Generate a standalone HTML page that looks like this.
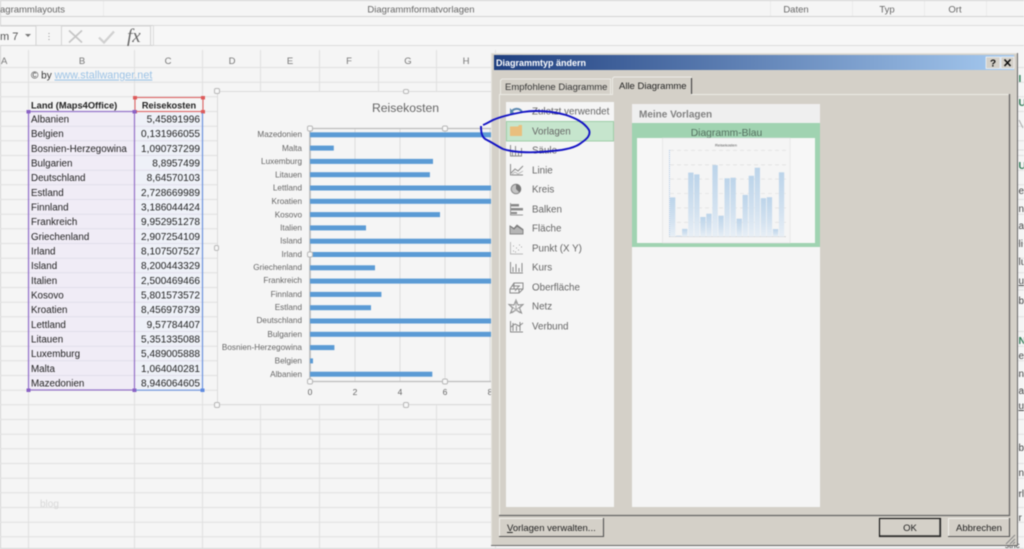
<!DOCTYPE html>
<html lang="de">
<head>
<meta charset="utf-8">
<title>Diagrammtyp ändern</title>
<style>
html,body{margin:0;padding:0;width:1024px;height:549px;overflow:hidden;background:#f5f5f5}
svg{display:block;filter:blur(.5px)}
text{font-family:"Liberation Sans",sans-serif}
.g{stroke:#e0e0e0;stroke-width:1}
.r{fill:#666;font-size:8.2px;text-anchor:end}
.c{font-size:9.8px;fill:#222}
.v{font-size:10.1px;fill:#222;text-anchor:end}
.h{font-size:9.5px;fill:#777;text-anchor:middle}
.l{font-size:9.8px;fill:#666}
.ic{fill:none;stroke:#8a8a8a;stroke-width:1}
.hd{fill:#f7f7f7;stroke:#b8b8b8;stroke-width:1}
.mb{fill:url(#mg)}
</style>
</head>
<body>
<svg width="1024" height="549" viewBox="0 0 1024 549" xmlns="http://www.w3.org/2000/svg">
<defs>
<linearGradient id="tb" x1="0" x2="1" y1="0" y2="0"><stop offset="0" stop-color="#1f3f7f"/><stop offset="1" stop-color="#a6caf0"/></linearGradient>
<linearGradient id="mg" x1="0" x2="0" y1="0" y2="1"><stop offset="0" stop-color="#bcd4ea"/><stop offset=".6" stop-color="#d3e2f0"/><stop offset="1" stop-color="#e8eff6"/></linearGradient>
</defs>

<rect width="1024" height="549" fill="#f5f5f5"/>

<!-- ribbon -->
<path d="M0 .5H1024M.5 0V549M0 16.5H1024M0 25.5H1024M0 45.5H1024M0 548.5H1024" stroke="#d2d2d2" fill="none"/>
<path d="M103.500 1V16M770.500 1V16M852.500 1V16M924.500 1V16M986.500 1V16" stroke="#ebebeb"/>
<text x="0" y="12.500" font-size="9.500" fill="#666">agrammlayouts</text>
<text x="421" y="12.500" font-size="9.500" fill="#666" text-anchor="middle">Diagrammformatvorlagen</text>
<text x="796" y="12.500" font-size="9.500" fill="#666" text-anchor="middle">Daten</text>
<text x="887" y="12.500" font-size="9.500" fill="#666" text-anchor="middle">Typ</text>
<text x="955" y="12.500" font-size="9.500" fill="#666" text-anchor="middle">Ort</text>

<!-- formula bar -->
<rect x="-2" y="26" width="38" height="19.500" fill="#f7f7f7" stroke="#d4d4d4"/>
<text x="0" y="40" font-size="11" fill="#555">m 7</text>
<path d="M25 34h6l-3 3z" fill="#777"/>
<path d="M49 33v1M49 36v1M49 39v1" stroke="#999"/>
<rect x="61.500" y="26" width="89" height="19.500" fill="#f7f7f7" stroke="#d4d4d4"/>
<path d="M69 30.500l13 12M82 30.500l-13 12" stroke="#c4c4c4" stroke-width="1.600" fill="none"/>
<path d="M99 37.500l5 5 10-11" stroke="#d0d0d0" stroke-width="2.200" fill="none"/>
<text x="127" y="42" font-size="19" fill="#666" font-style="italic" style="font-family:'Liberation Serif',serif">fx</text>
<rect x="153.500" y="25.500" width="880" height="20" fill="#f7f7f7" stroke="#dcdcdc"/>

<!-- sheet grid -->
<path class="g" d="M0 67.500H1024M0 82.200H1024M0 96.800H1024M0 111.500H1024M0 126.200H1024M0 140.800H1024M0 155.500H1024M0 170.200H1024M0 184.800H1024M0 199.500H1024M0 214.200H1024M0 228.800H1024M0 243.500H1024M0 258.200H1024M0 272.800H1024M0 287.500H1024M0 302.200H1024M0 316.800H1024M0 331.500H1024M0 346.200H1024M0 360.800H1024M0 375.500H1024M0 390.200H1024M0 404.800H1024M0 419.500H1024M0 434.200H1024M0 448.800H1024M0 463.500H1024M0 478.200H1024M0 492.800H1024M0 507.500H1024M0 522.200H1024M0 536.800H1024"/>
<path class="g" d="M28.500 50V548M134.500 50V548M202.500 50V548M260.500 50V548M319.500 50V548M378.500 50V548M436.500 50V548M495.500 50V548"/>
<text x="1" y="64" class="h" style="text-anchor:start">A</text>
<text x="82" y="64" class="h">B</text>
<text x="168" y="64" class="h">C</text>
<text x="232" y="64" class="h">D</text>
<text x="290" y="64" class="h">E</text>
<text x="349" y="64" class="h">F</text>
<text x="408" y="64" class="h">G</text>
<text x="466" y="64" class="h">H</text>

<text x="31" y="78.500" font-size="10" fill="#333">© by <tspan fill="#9cc3e6" font-size="10.800" text-decoration="underline">www.stallwanger.net </tspan></text>

<!-- table -->
<rect x="29" y="112" width="105" height="278" fill="#f0ecf6"/>
<rect x="136" y="112" width="66" height="278" fill="#eef1f8"/>
<path d="M29 126.200H134M29 140.800H134M29 155.500H134M29 170.200H134M29 184.800H134M29 199.500H134M29 214.200H134M29 228.800H134M29 243.500H134M29 258.200H134M29 272.800H134M29 287.500H134M29 302.200H134M29 316.800H134M29 331.500H134M29 346.200H134M29 360.800H134M29 375.500H134M136 126.200H202M136 140.800H202M136 155.500H202M136 170.200H202M136 184.800H202M136 199.500H202M136 214.200H202M136 228.800H202M136 243.500H202M136 258.200H202M136 272.800H202M136 287.500H202M136 302.200H202M136 316.800H202M136 331.500H202M136 346.200H202M136 360.800H202M136 375.500H202" stroke="#e0deea"/>
<text x="31" y="108.500" font-size="9.300" font-weight="bold" fill="#222">Land (Maps4Office)</text>
<text x="169" y="108.500" font-size="9.200" font-weight="bold" fill="#222" text-anchor="middle">Reisekosten</text>

<text class="c" x="31" y="122.500">Albanien</text><text class="v" x="200" y="122.500">5,45891996</text>
<text class="c" x="31" y="137.200">Belgien</text><text class="v" x="200" y="137.200">0,131966055</text>
<text class="c" x="31" y="151.800">Bosnien-Herzegowina</text><text class="v" x="200" y="151.800">1,090737299</text>
<text class="c" x="31" y="166.500">Bulgarien</text><text class="v" x="200" y="166.500">8,8957499</text>
<text class="c" x="31" y="181.200">Deutschland</text><text class="v" x="200" y="181.200">8,64570103</text>
<text class="c" x="31" y="195.800">Estland</text><text class="v" x="200" y="195.800">2,728669989</text>
<text class="c" x="31" y="210.500">Finnland</text><text class="v" x="200" y="210.500">3,186044424</text>
<text class="c" x="31" y="225.200">Frankreich</text><text class="v" x="200" y="225.200">9,952951278</text>
<text class="c" x="31" y="239.800">Griechenland</text><text class="v" x="200" y="239.800">2,907254109</text>
<text class="c" x="31" y="254.500">Irland</text><text class="v" x="200" y="254.500">8,107507527</text>
<text class="c" x="31" y="269.200">Island</text><text class="v" x="200" y="269.200">8,200443329</text>
<text class="c" x="31" y="283.800">Italien</text><text class="v" x="200" y="283.800">2,500469466</text>
<text class="c" x="31" y="298.500">Kosovo</text><text class="v" x="200" y="298.500">5,801573572</text>
<text class="c" x="31" y="313.200">Kroatien</text><text class="v" x="200" y="313.200">8,456978739</text>
<text class="c" x="31" y="327.800">Lettland</text><text class="v" x="200" y="327.800">9,57784407</text>
<text class="c" x="31" y="342.500">Litauen</text><text class="v" x="200" y="342.500">5,351335088</text>
<text class="c" x="31" y="357.200">Luxemburg</text><text class="v" x="200" y="357.200">5,489005888</text>
<text class="c" x="31" y="371.800">Malta</text><text class="v" x="200" y="371.800">1,064040281</text>
<text class="c" x="31" y="386.500">Mazedonien</text><text class="v" x="200" y="386.500">8,946064605</text>

<!-- range highlight -->
<rect x="135" y="97.500" width="68" height="14" fill="none" stroke="#e06666" stroke-width="1.100"/>
<path d="M133 96h4v3.500h-4zM201 96h4v3.500h-4zM133 110h4v3.500h-4zM201 110h4v3.500h-4z" fill="#dd5b5b"/>
<rect x="28.500" y="111.500" width="106" height="278.500" fill="none" stroke="#9270c8" stroke-width="1.200"/>
<path d="M26.500 110h4v3.500h-4zM132.500 110h4v3.500h-4zM26.500 388.500h4v3.500h-4zM132.500 388.500h4v3.500h-4z" fill="#8a62c4"/>
<path d="M136 390.200H202.500V113" fill="none" stroke="#6d93dd" stroke-width="1.200"/>
<path d="M200.500 388.500h4v3.500h-4z" fill="#5f8be0"/>

<text x="40" y="507" font-size="10" fill="#d8d8d8">blog</text>

<!-- chart -->
<rect x="217.500" y="91.500" width="400" height="313" fill="#f5f5f5" stroke="#dcdcdc"/>
<text x="405.500" y="112" font-size="12.200" fill="#666" text-anchor="middle">Reisekosten</text>
<path d="M355 128V381M400 128V381M445 128V381M490 128V381" stroke="#dcdcdc"/>
<path d="M310 128.500H495M310 381.500H495" stroke="#bdbdbd" stroke-width="1.200"/>
<path d="M310 128V381" stroke="#b8b8b8" stroke-width="1.600"/>

<g fill="#5b9bd5">
<rect x="310" y="132.300" width="200" height="5"/>
<rect x="310" y="145.600" width="23.800" height="5"/>
<rect x="310" y="158.900" width="123" height="5"/>
<rect x="310" y="172.200" width="119.900" height="5"/>
<rect x="310" y="185.500" width="200" height="5"/>
<rect x="310" y="198.800" width="189" height="5"/>
<rect x="310" y="212.100" width="130" height="5"/>
<rect x="310" y="225.400" width="56" height="5"/>
<rect x="310" y="238.700" width="184" height="5"/>
<rect x="310" y="252" width="182" height="5"/>
<rect x="310" y="265.300" width="65" height="5"/>
<rect x="310" y="278.600" width="200" height="5"/>
<rect x="310" y="291.900" width="71.400" height="5"/>
<rect x="310" y="305.200" width="61" height="5"/>
<rect x="310" y="318.500" width="194" height="5"/>
<rect x="310" y="331.800" width="199" height="5"/>
<rect x="310" y="345.100" width="24.400" height="5"/>
<rect x="310" y="358.400" width="3" height="5"/>
<rect x="310" y="371.700" width="122.300" height="5"/>
</g>

<text class="r" x="302" y="137">Mazedonien</text>
<text class="r" x="302" y="151">Malta</text>
<text class="r" x="302" y="164">Luxemburg</text>
<text class="r" x="302" y="177.500">Litauen</text>
<text class="r" x="302" y="190.500">Lettland</text>
<text class="r" x="302" y="204">Kroatien</text>
<text class="r" x="302" y="217.500">Kosovo</text>
<text class="r" x="302" y="230.500">Italien</text>
<text class="r" x="302" y="243.500">Island</text>
<text class="r" x="302" y="257">Irland</text>
<text class="r" x="302" y="270">Griechenland</text>
<text class="r" x="302" y="283">Frankreich</text>
<text class="r" x="302" y="297">Finnland</text>
<text class="r" x="302" y="310">Estland</text>
<text class="r" x="302" y="323">Deutschland</text>
<text class="r" x="302" y="337">Bulgarien</text>
<text class="r" x="302" y="350">Bosnien-Herzegowina</text>
<text class="r" x="302" y="363.500">Belgien</text>
<text class="r" x="302" y="377">Albanien</text>

<g font-size="8.500" fill="#666" text-anchor="middle">
<text x="310" y="395">0</text><text x="355" y="395">2</text><text x="400" y="395">4</text><text x="445" y="395">6</text><text x="490" y="395">8</text>
</g>

<g class="hd">
<rect x="214.500" y="88.500" width="5" height="5" rx="1.500"/>
<rect x="403.500" y="89.500" width="5" height="4" rx="1.500"/>
<rect x="214.500" y="245.500" width="4" height="5" rx="1.500"/>
<rect x="214.500" y="402.500" width="5" height="5" rx="1.500"/>
<rect x="403.500" y="402.500" width="5" height="5" rx="1.500"/>
<rect x="307.500" y="126" width="5" height="5" rx="1.500"/>
<rect x="442.500" y="126" width="5" height="5" rx="1.500"/>
<rect x="307.500" y="252" width="5" height="5" rx="1.500"/>
<rect x="307.500" y="379" width="5" height="5" rx="1.500"/>
<rect x="442.500" y="379" width="5" height="5" rx="1.500"/>
</g>

<!-- right-edge fragments -->
<g font-size="10" fill="#444">
<text x="1018.500" y="82" fill="#2f7a55" font-weight="bold">I</text>
<text x="1018.500" y="106" fill="#2f7a55" font-weight="bold">U</text>
<text x="1018.500" y="169" fill="#2f7a55" font-weight="bold">U</text>
<text x="1018.500" y="194">ei</text>
<text x="1018.500" y="212">n</text>
<text x="1018.500" y="229">ar</text>
<text x="1018.500" y="247">li</text>
<text x="1018.500" y="265">lu</text>
<text x="1018.500" y="284" text-decoration="underline">u</text>
<text x="1018.500" y="304">b</text>
<text x="1018.500" y="344" fill="#2f7a55" font-weight="bold">N</text>
<text x="1018.500" y="359">ei</text>
<text x="1018.500" y="377">n</text>
<text x="1018.500" y="394">ar</text>
<text x="1018.500" y="409" text-decoration="underline">u</text>
<text x="1018.500" y="451">b</text>
<text x="1018.500" y="476">n</text>
<text x="1018.500" y="497">rl</text>
<text x="1018.500" y="521">r</text>
<text x="1005" y="548" font-size="8">stric</text>
</g>
<path d="M1018 150H1024M1018 290H1024" stroke="#ddd"/>
<path d="M1019 120l4 8" stroke="#aaa" fill="none"/>

<!-- dialog -->
<rect x="491" y="53" width="527" height="492.500" fill="#d4d0c8"/>
<path d="M491.500 545V53.500H1017" fill="none" stroke="#e4e2dc"/>
<path d="M1017.500 53V546M491 545.500H1018" stroke="#666" stroke-width="1"/>
<rect x="494" y="55" width="520" height="15" fill="url(#tb)"/>
<text x="496" y="66" font-size="9" font-weight="bold" fill="#fff">Diagrammtyp ändern</text>
<rect x="986" y="57" width="14" height="11.500" fill="#d4d0c8" stroke="#fff" stroke-width=".6"/>
<rect x="1001" y="57" width="13" height="11.500" fill="#d4d0c8" stroke="#fff" stroke-width=".6"/>
<text x="993" y="66.500" font-size="10" font-weight="bold" fill="#111" text-anchor="middle">?</text>
<path d="M1004.500 59.500l6 6.500M1010.500 59.500l-6 6.500" stroke="#111" stroke-width="1.600"/>

<!-- tab panel -->
<rect x="499" y="94" width="511" height="421" fill="#d4d0c8"/>
<path d="M499.500 515V94.500H1009" fill="none" stroke="#ecebe6"/>
<path d="M1009.500 94V515.500H499" fill="none" stroke="#666" stroke-width="1.300"/>
<path d="M500.500 94V80.500L502 79H610.500V94" fill="#d4d0c8" stroke="#ecebe6"/>
<text x="505" y="90" font-size="9.500" fill="#333">Empfohlene Diagramme</text>
<path d="M612.500 95V78.500L614 77H691V95" fill="#d4d0c8" stroke="#ecebe6"/>
<path d="M691.500 78V94" stroke="#444" stroke-width="1.200"/>
<rect x="613" y="93" width="78" height="2.500" fill="#d4d0c8"/>
<text x="619" y="89" font-size="9.500" fill="#222">Alle Diagramme</text>

<!-- left list -->
<rect x="506" y="102" width="108" height="405" fill="#f5f5f5"/>
<rect x="506.500" y="121.500" width="107" height="19.500" fill="#c6e5cd" stroke="#9fcfa9"/>
<text class="l" x="532" y="114.500">Zuletzt verwendet</text>
<text class="l" x="532" y="134.500">Vorlagen</text>
<text class="l" x="532" y="153.500">Säule</text>
<text class="l" x="532" y="173.500">Linie</text>
<text class="l" x="532" y="192.500">Kreis</text>
<text class="l" x="532" y="212.500">Balken</text>
<text class="l" x="532" y="231.500">Fläche</text>
<text class="l" x="532" y="251.500">Punkt (X Y)</text>
<text class="l" x="532" y="270.500">Kurs</text>
<text class="l" x="532" y="290.500">Oberfläche</text>
<text class="l" x="532" y="309.500">Netz</text>
<text class="l" x="532" y="329.500">Verbund</text>

<!-- list icons -->
<path d="M511 113a6 6 0 0 1 11-1" fill="none" stroke="#5b88b0" stroke-width="2"/>
<path d="M510 108v6h5z" fill="#5b88b0"/>
<path d="M510 126.500h8l1-1.500h3V136h-12z" fill="#e9bf7e"/>
<path class="ic" d="M510.500 145V156H522M512.500 156V150M515.500 156V146M518.500 156V151M521.500 156V148"/>
<path class="ic" d="M510.500 164V175H523M511 173l4-4 3 2 5-5" stroke="#999"/>
<path d="M511 175l4-3 3 2 5-3" fill="none" stroke="#bbb"/>
<circle cx="516" cy="189" r="4.800" fill="#c4c4c4" stroke="#888"/>
<path d="M516 189v-4.800a4.800 4.800 0 0 1 3.400 8.200z" fill="#777"/>
<path d="M510.500 203V215H523" fill="none" stroke="#999"/>
<path d="M511 204h8v2.500h-8zM511 208h12v2.500h-12zM511 212h6v2h-6z" fill="#8a8a8a"/>
<path d="M510 234v-8l4 2.500 3-3.500 6 4.500v4.500z" fill="#b5b5b5" stroke="#888"/>
<path d="M510 226l4 3 3-3 6 4" fill="none" stroke="#777"/>
<path d="M510.500 242V254H523" fill="none" stroke="#bbb"/>
<path d="M513 251h1M516 248h1M519 245h1M515 252h1M518 250h1M521 247h1M513 246h1" stroke="#aaa"/>
<path class="ic" d="M510.500 262V273H523M513 272v-5M516 272v-8M519 272v-4M522 272v-9"/>
<path d="M510 289l4-6h9v6l-4 4h-9zM514 283v6h9M510 289h9v4M512 286h8M515 291l4-5" class="ic"/>
<path d="M516 300l2 5 5-.5-3.500 3.500 2 5-5.500-3-5.500 3 2-5-3.500-3.500 5 .5z" class="ic"/>
<path d="M516 300v10M510 305l6 5 6-5M512 313l4-3 4 3" fill="none" stroke="#aaa"/>
<path class="ic" d="M510.500 321V332H523M513 331v-8M516.500 331v-5M520 331v-9M511 327l4-3 4 2 4-3"/>

<!-- right panel -->
<rect x="632" y="104" width="188" height="403" fill="#f5f5f5"/>
<rect x="632" y="104" width="188" height="19" fill="#efefef"/>
<text x="639" y="117.500" font-size="10" font-weight="bold" fill="#808080">Meine Vorlagen</text>
<rect x="632" y="123" width="188" height="124" fill="#a0d3b1"/>
<text x="726.500" y="136" font-size="10.300" fill="#557060" text-anchor="middle">Diagramm-Blau</text>
<rect x="637" y="138" width="178" height="105" fill="#f7f7f7"/>
<rect x="662.500" y="138" width="127.500" height="105" fill="#f5f5f5" stroke="#e0e0e0" stroke-width=".6"/>
<text x="726" y="146.500" font-size="4" fill="#555" text-anchor="middle">Reisekosten</text>
<path d="M670 150.300H786M670 164.800H786M670 179.100H786M670 193.500H786M670 207.900H786M670 222.300H786" stroke="#dcdcdc" stroke-width=".6" stroke-dasharray="4 3"/>
<path d="M669.500 150V236.700" stroke="#a9c6e8" stroke-dasharray="1 1"/>
<path d="M669 236.700H786" stroke="#c4c4c4" stroke-width=".7"/>
<rect class="mb" x="670" y="197.400" width="5.300" height="39.300"/>
<rect class="mb" x="676" y="235.700" width="5.300" height="1"/>
<rect class="mb" x="682.100" y="228.900" width="5.300" height="7.800"/>
<rect class="mb" x="688.200" y="172.600" width="5.300" height="64.100"/>
<rect class="mb" x="694.200" y="174.400" width="5.300" height="62.300"/>
<rect class="mb" x="700.300" y="217" width="5.300" height="19.700"/>
<rect class="mb" x="706.300" y="213.700" width="5.300" height="23"/>
<rect class="mb" x="712.400" y="165.100" width="5.300" height="71.600"/>
<rect class="mb" x="718.400" y="215.700" width="5.300" height="21"/>
<rect class="mb" x="724.500" y="178.300" width="5.300" height="58.400"/>
<rect class="mb" x="730.500" y="177.700" width="5.300" height="59"/>
<rect class="mb" x="736.600" y="218.700" width="5.300" height="18"/>
<rect class="mb" x="742.600" y="194.900" width="5.300" height="41.800"/>
<rect class="mb" x="748.700" y="175.800" width="5.300" height="60.900"/>
<rect class="mb" x="754.700" y="167.700" width="5.300" height="69"/>
<rect class="mb" x="760.800" y="198.200" width="5.300" height="38.500"/>
<rect class="mb" x="766.800" y="197.200" width="5.300" height="39.500"/>
<rect class="mb" x="772.900" y="229.100" width="5.300" height="7.600"/>
<rect class="mb" x="778.900" y="172.300" width="5.300" height="64.400"/>

<!-- buttons -->
<rect x="499.500" y="518.500" width="104" height="18" fill="#d4d0c8" stroke="#f0efea"/>
<path d="M603.500 518V536.500H499" fill="none" stroke="#555" stroke-width="1.100"/>
<text x="507" y="531" font-size="9.500" fill="#222"><tspan text-decoration="underline">V</tspan>orlagen verwalten...</text>
<rect x="879.500" y="518.500" width="61" height="18" fill="#d4d0c8" stroke="#111" stroke-width="1.100"/>
<path d="M940 519V536H880" fill="none" stroke="#333" stroke-width="1.400"/>
<text x="910" y="531" font-size="9.500" fill="#222" text-anchor="middle">OK</text>
<rect x="948.500" y="518.500" width="61" height="18" fill="#d4d0c8" stroke="#f0efea"/>
<path d="M1009.500 518V536.500H948" fill="none" stroke="#555" stroke-width="1.100"/>
<text x="979" y="531" font-size="9.500" fill="#222" text-anchor="middle">Abbrechen</text>
<path d="M1006 544l9-9M1010 544l5-5M1013 544l2-2" stroke="#888" fill="none"/>

<!-- scribble -->
<path d="M481 126C481 133 482 138 487 140C493 143 497 146 503 149C515 153 535 153 552 151C565 150 575 148 581 143C587 139 591 135 589 130C584 122 575 118 566 115C552 111 535 110 523 112C512 114 502 116 493 120C489 122 486 124 483 125" fill="none" stroke="#1212c4" stroke-width="1.900"/>
</svg>
</body>
</html>
